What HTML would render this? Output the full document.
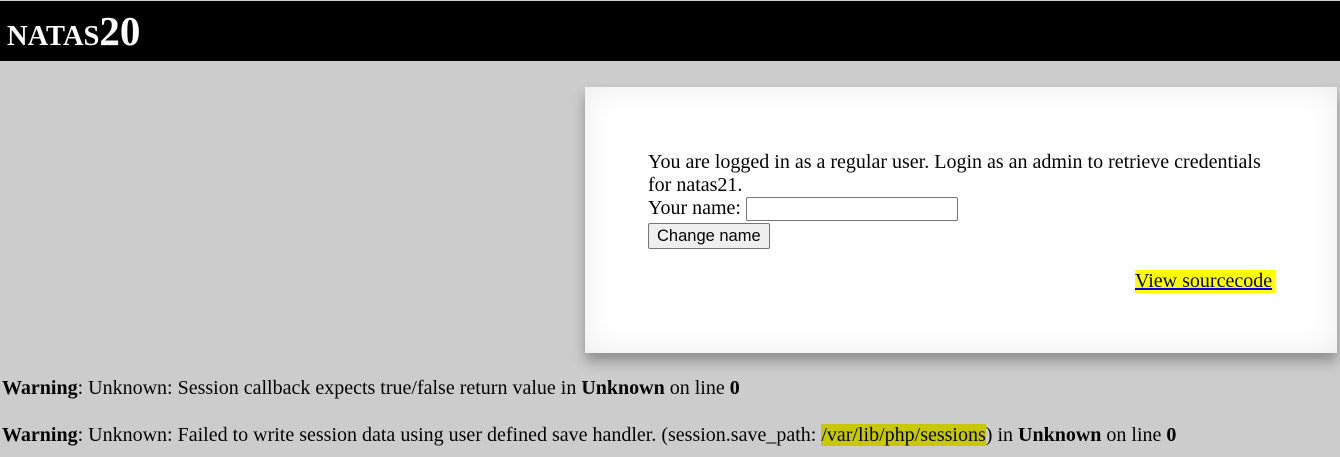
<!DOCTYPE html>
<html><head><meta charset="utf-8"><style>
html,body{margin:0;padding:0;}
body{width:1340px;height:457px;background:#ccc;font-family:"Liberation Serif",serif;font-size:20px;color:#000;position:relative;overflow:hidden;}
#hdr{position:absolute;left:0;top:1px;width:1340px;height:60px;background:#000;}
#hdr h1{margin:0;position:absolute;left:7px;top:7px;color:#fff;font-weight:bold;font-size:41px;line-height:46px;}
#hdr h1 .s{font-size:28.5px;}
#box{position:absolute;left:585px;top:87px;width:752px;height:266px;background:#fff;box-shadow:inset 0 0 30px rgba(0,0,0,0.08),0 8px 12px rgba(0,0,0,0.3);}
#txt{position:absolute;left:648px;top:151px;width:625px;line-height:23px;}
input[type=text]{width:206px;height:20px;border:1px solid #767676;border-radius:2px;padding:1px 2px;vertical-align:middle;margin:0;}
button{font-family:"Liberation Sans",sans-serif;font-size:16.5px;height:26px;padding:1px 8px;border:1px solid #767676;border-radius:2px;background:#efefef;margin:2px 0 0;}
#vs{position:absolute;left:1135px;top:270px;background:#ff0;color:#000;padding:0 3px 0 0;line-height:23px;}
#vs a{color:#000;text-decoration:underline;text-decoration-color:#00e;}
.w{position:absolute;left:2px;}
.hl{background:#c8c800;}
</style></head><body>
<div id="hdr"><h1><span class="s">NATAS</span>20</h1></div>
<div id="box"></div>
<div id="txt">You are logged in as a regular user. Login as an admin to retrieve credentials for natas21.<br>Your name: <input type="text"><br><button>Change name</button></div>
<div id="vs"><a>View sourcecode</a></div>
<div class="w" style="top:377px"><b>Warning</b>: Unknown: Session callback expects true/false return value in <b>Unknown</b> on line <b>0</b></div>
<div class="w" style="top:424px"><b>Warning</b>: Unknown: Failed to write session data using user defined save handler. (session.save_path: <span class="hl">/var/lib/php/sessions</span>) in <b>Unknown</b> on line <b>0</b></div>
</body></html>
